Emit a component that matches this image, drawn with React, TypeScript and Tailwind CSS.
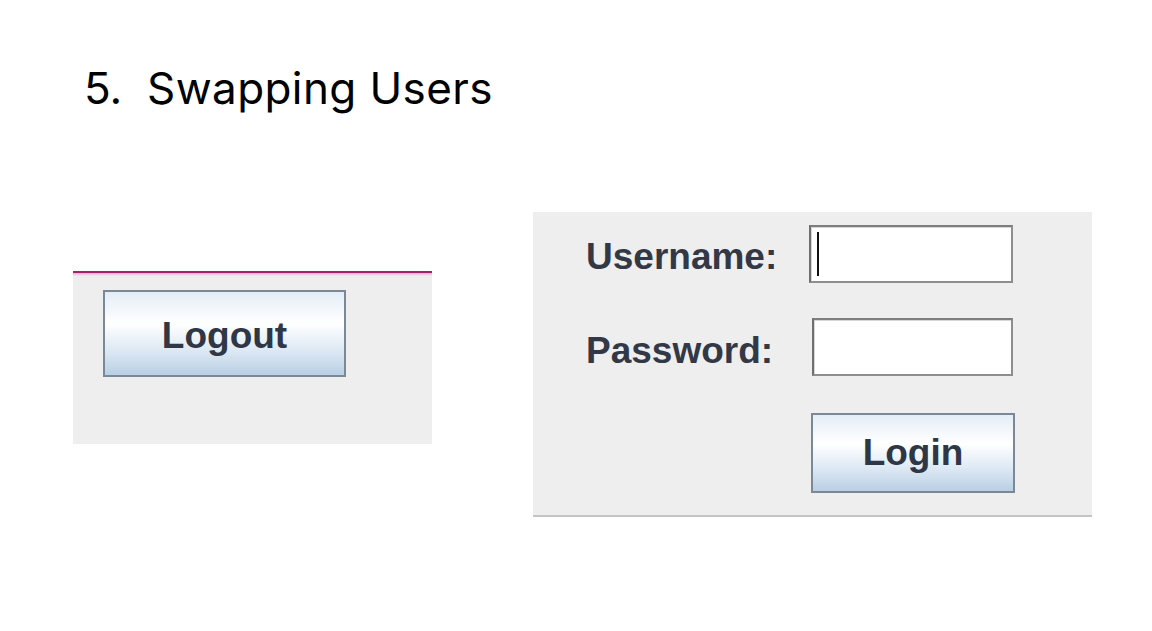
const buttonClass =
    "flex items-center justify-center border-2 border-[#7b8898] bg-[linear-gradient(to_bottom,#e4edf6_0%,#ffffff_38%,#dbe7f3_72%,#b9cfe4_100%)] font-bold text-[#2f3645] text-[37px] font-['Liberation_Sans',Arial,sans-serif]";

const labelClass =
    "font-bold text-[#323846] text-[37px] leading-none font-['Liberation_Sans',Arial,sans-serif]";

function TextField({ caret, width }: { caret?: boolean; width: string }) {
    return (
        <div className={`flex items-center ${width} h-[58px] bg-white border-2 border-[#8e8e8e] border-l-[#6f6f6f] border-t-[#7d7d7d] shadow-[inset_1px_1px_0_#d6d6d6]`}>
            {caret && <div className="ml-[6px] w-[2px] h-[44px] bg-[#111]" />}
        </div>
    );
}

export default function App() {
    return (
        <div className="w-[1152px] h-[631px] bg-white overflow-hidden">
            <div className="flex items-baseline pt-[62px] pl-[84px] text-[44px] leading-[52px] text-black font-['Inter','Liberation_Sans',sans-serif]">
                <span className="w-[63px]">5.</span>
                <span className="tracking-[0.4px]">Swapping Users</span>
            </div>

            <div className="flex items-start mt-[98px] pl-[73px] gap-[101px]">
                {/* logged-in panel */}
                <div className="flex flex-col mt-[59px] w-[359px] h-[173px] bg-[#eeeeee]">
                    <div className="h-[2px] bg-[#a2226f]" />
                    <div className="h-[3px] bg-[linear-gradient(to_bottom,#f2a6d4,#eeeeee)]" />
                    <div className="pl-[30px] pt-[14px]">
                        <div className={`${buttonClass} w-[243px] h-[87px] pt-[4px]`}>Logout</div>
                    </div>
                </div>

                {/* login panel */}
                <div className="w-[559px] h-[305px] bg-[#eeeeee] border-b-2 border-[#c4c4c4] pt-[13px] pl-[53px]">
                    <div className="grid grid-cols-[223px_206px] gap-y-[35px] items-center">
                        <span className={`${labelClass} pt-[5px]`}>Username:</span>
                        <TextField caret width="w-[204px]" />
                        <span className={`${labelClass} pt-[6px]`}>Password:</span>
                        <div className="ml-[3px]">
                            <TextField width="w-[201px]" />
                        </div>
                        <div />
                        <div className={`${buttonClass} ml-[2px] w-[204px] h-[80px] mt-[2px]`}>Login</div>
                    </div>
                </div>
            </div>
        </div>
    );
}
